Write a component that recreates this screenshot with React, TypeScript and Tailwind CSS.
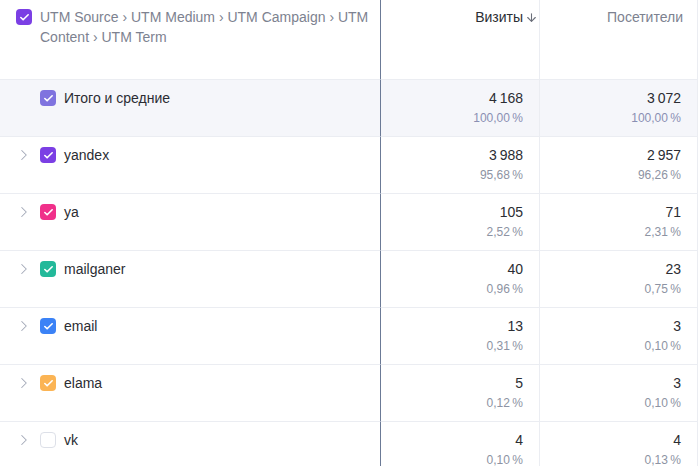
import { ChevronRight, Check, ArrowDown } from "lucide-react";

type Row = {
  name: string;
  color: string | null;
  visits: string;
  visitsPct: string;
  users: string;
  usersPct: string;
};

const rows: Row[] = [
  { name: "yandex", color: "bg-[#7b3fe4]", visits: "3\u202F988", visitsPct: "95,68\u202F%", users: "2\u202F957", usersPct: "96,26\u202F%" },
  { name: "ya", color: "bg-[#f0308a]", visits: "105", visitsPct: "2,52\u202F%", users: "71", usersPct: "2,31\u202F%" },
  { name: "mailganer", color: "bg-[#23b99a]", visits: "40", visitsPct: "0,96\u202F%", users: "23", usersPct: "0,75\u202F%" },
  { name: "email", color: "bg-[#3b82f6]", visits: "13", visitsPct: "0,31\u202F%", users: "3", usersPct: "0,10\u202F%" },
  { name: "elama", color: "bg-[#fbb454]", visits: "5", visitsPct: "0,12\u202F%", users: "3", usersPct: "0,10\u202F%" },
  { name: "vk", color: null, visits: "4", visitsPct: "0,10\u202F%", users: "4", usersPct: "0,13\u202F%" },
];

const Box = ({ color }: { color: string | null }) =>
  color ? (
    <span className={`flex h-[16px] w-[16px] shrink-0 items-center justify-center rounded-[4px] ${color}`}>
      <Check size={11} strokeWidth={3.5} className="text-white" />
    </span>
  ) : (
    <span className="block h-[16px] w-[16px] shrink-0 rounded-[4px] border border-[#dde0e8] bg-white" />
  );

const NumCell = ({ value, pct, pctColor, bg }: { value: string; pct: string; pctColor: string; bg?: string }) => (
  <div className={`flex h-[57px] flex-col items-end border-b border-r border-[#ebedf2] pr-[16px] pt-[9px] ${bg ?? ""}`}>
    <span className="text-[14px] leading-[18px] text-[#2b2d33]">{value}</span>
    <span className={`mt-[3px] text-[12px] leading-[16px] ${pctColor}`}>{pct}</span>
  </div>
);

export default function App() {
  return (
    <div className="h-[466px] w-[699px] overflow-hidden bg-white font-['Liberation_Sans',Arial,sans-serif]">
      <div className="grid grid-cols-[381px_159px_158px]">
        {/* header */}
        <div className="flex h-[80px] gap-[8px] border-b border-r border-b-[#ebedf2] border-r-[#6b7a96] pl-[16px] pr-[6px] pt-[7px]">
          <div className="pt-[2px]">
            <Box color="bg-[#7b3fe4]" />
          </div>
          <div className="text-[14px] leading-[20px] text-[#7d8290]">
            UTM Source › UTM Medium › UTM Campaign › UTM Content › UTM Term
          </div>
        </div>
        <div className="flex h-[80px] justify-end gap-[2px] border-b border-r border-[#ebedf2] pr-[1px] pt-[7px]">
          <span className="text-[14px] leading-[20px] text-[#2b2d33]">Визиты</span>
          <ArrowDown size={13} strokeWidth={2} className="mt-[4px] text-[#6b6f7a]" />
        </div>
        <div className="flex h-[80px] justify-end border-b border-r border-[#ebedf2] pr-[14px] pt-[7px]">
          <span className="text-[14px] leading-[20px] text-[#7d8290]">Посетители</span>
        </div>

        {/* totals */}
        <div className="flex h-[57px] items-start gap-[8px] border-b border-r border-b-[#ebedf2] border-r-[#6b7a96] bg-[#f5f6fa] pl-[40px] pt-[10px]">
          <Box color="bg-[#7f73df]" />
          <span className="-mt-[1px] text-[14px] leading-[18px] text-[#2b2d33]">Итого и средние</span>
        </div>
        <NumCell value={"4\u202F168"} pct={"100,00\u202F%"} pctColor="text-[#8a8fb3]" bg="bg-[#f5f6fa]" />
        <NumCell value={"3\u202F072"} pct={"100,00\u202F%"} pctColor="text-[#8a8fb3]" bg="bg-[#f5f6fa]" />

        {rows.map((r) => (
          <div key={r.name} className="contents">
            <div className="flex h-[57px] items-start border-b border-r border-b-[#ebedf2] border-r-[#6b7a96] pl-[15px] pt-[10px]">
              <ChevronRight size={18} strokeWidth={1.4} className="-mt-[1px] text-[#a3a9b8]" />
              <span className="ml-[7px]">
                <Box color={r.color} />
              </span>
              <span className="-mt-[1px] ml-[8px] text-[14px] leading-[18px] text-[#2b2d33]">{r.name}</span>
            </div>
            <NumCell value={r.visits} pct={r.visitsPct} pctColor="text-[#8d93a3]" />
            <NumCell value={r.users} pct={r.usersPct} pctColor="text-[#8d93a3]" />
          </div>
        ))}
      </div>
    </div>
  );
}
